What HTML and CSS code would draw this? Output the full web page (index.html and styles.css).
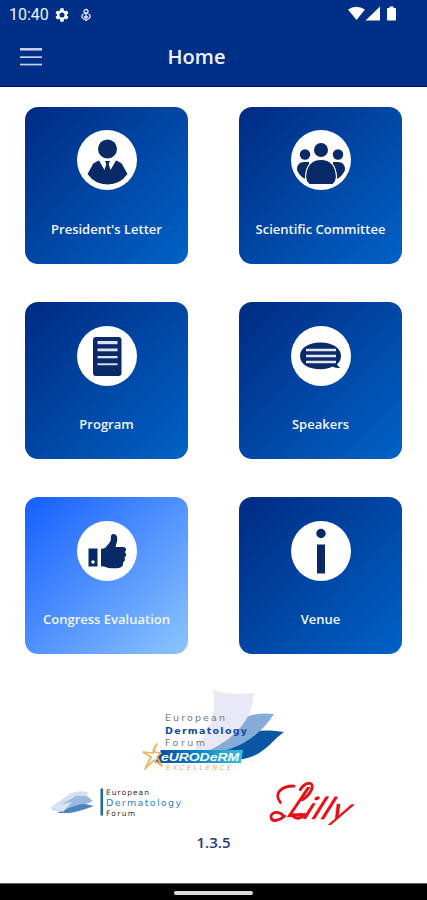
FILE: index.html
```html
<!DOCTYPE html>
<html lang="en">
<head>
<meta charset="utf-8">
<title>Home</title>
<link rel="stylesheet" href="styles.css">
</head>
<body>
<div class="app">
  <header class="top">
    <div class="status">
      <span class="clock">10:40</span>
      <svg class="gear" viewBox="0 0 24 24"><path fill="#fff" fill-rule="evenodd" d="M19.4 13a7.500 7.500 0 0 0 0-2l2.300-1.800-2.300-4-2.800 1.100a8 8 0 0 0-1.800-1L14.400 2H9.600l-.4 3.300a8 8 0 0 0-1.800 1L4.600 5.200l-2.300 4L4.600 11a7.500 7.500 0 0 0 0 2l-2.300 1.800 2.300 4 2.800-1.100a8 8 0 0 0 1.800 1l.4 3.300h4.800l.4-3.300a8 8 0 0 0 1.800-1l2.800 1.100 2.300-4zM12 15.800a3.800 3.800 0 1 1 0-7.600 3.800 3.800 0 0 1 0 7.600z"/></svg>
      <svg class="sync" viewBox="0 0 10 14"><g fill="none" stroke="#dfe6ff" stroke-width="1.300"><circle cx="5" cy="3.500" r="2"/><path d="M5 4v5M2.500 6.200C.3 7 .3 9.500 2 10.300L5 12.500l3-2.200c1.700-.8 1.700-3.300-.5-4.100M3 8.300l2 2 2-2"/></g></svg>
      <svg class="signals" viewBox="0 0 50 16"><g fill="#fff"><path d="M0 3.500Q8-2 17 3.500L8.500 14z"/><path d="M17.500 14.500 32 .5v14z"/><path d="M39 3q0-1 1-1h1.500V.5h4V2H47q1 0 1 1v10.500q0 1-1 1h-7q-1 0-1-1z"/></g></svg>
    </div>
    <div class="bar">
      <svg class="menu" viewBox="0 0 22 20"><g fill="#c9cdea"><rect y="1" width="22" height="2.600"/><rect y="9.300" width="22" height="1.700"/><rect y="16.700" width="22" height="1.700"/></g></svg>
      <h1>Home</h1>
    </div>
  </header>

  <main class="grid">
    <a class="card">
      <svg class="icon" viewBox="0 0 60 60"><circle cx="30" cy="30" r="30" fill="#fff"/><g fill="#092967"><circle cx="30.500" cy="19" r="9.500"/><path d="M10.500 44 16 34q1-1.500 6-3.500l5.500 9.500 1.800-6-1.300-3h5l-1.300 3 1.800 6L39 30.500q5 2 6 3.500l5.500 10Q43 54.500 30.500 54.500T10.500 44z"/></g></svg>
      <span>President's Letter</span>
    </a>
    <a class="card">
      <svg class="icon" viewBox="0 0 60 60"><circle cx="30" cy="30" r="30" fill="#fff"/><g fill="#092967"><circle cx="14" cy="24.500" r="5.200"/><circle cx="47" cy="24.500" r="5.200"/><circle cx="30" cy="20" r="7"/><path d="M6 40q0-8 7-8h5v17l-5-.5Q8 45 6 40zM54 40q0-8-7-8h-5v17l5-.5Q52 45 54 40z"/><path stroke="#fff" stroke-width="1.200" d="M18 54.500Q14.500 51 14.500 47q1-17.500 15.500-17.500T45.500 47q0 4-3.500 7.500z"/></g></svg>
      <span>Scientific Committee</span>
    </a>
    <a class="card">
      <svg class="icon" viewBox="0 0 60 60"><circle cx="30" cy="30" r="30" fill="#fff"/><rect x="16" y="11" width="28.500" height="39" rx="3" fill="#092967"/><g fill="#dbe1f2"><rect x="20.500" y="15" width="20" height="3.200"/><rect x="20.500" y="22.500" width="20" height="2.800"/><rect x="20.500" y="30" width="20" height="2.300"/><rect x="20.500" y="37.300" width="20" height="1.900"/></g></svg>
      <span>Program</span>
    </a>
    <a class="card">
      <svg class="icon" viewBox="0 0 60 60"><circle cx="30" cy="30" r="30" fill="#fff"/><path fill="#092967" d="M29.500 16.500c12 0 20.500 5.500 20.500 13.500 0 3.500-1.500 6-4 8.500 1 1.500 2 2.500 3.500 3.500-3.500 0-6-.5-8-1.500-3.500 1.700-7.500 2.800-12 2.800C17.500 43.300 9 38 9 30s8.500-13.500 20.500-13.500z"/><path stroke="#e4e7f6" stroke-width="2.300" d="M15 24h30M15 30h30M15 36h30"/></svg>
      <span>Speakers</span>
    </a>
    <a class="card card-active">
      <svg class="icon" viewBox="0 0 60 60"><circle cx="30" cy="30" r="30" fill="#fff"/><path fill="#092967" d="M11.500 27.500h9v18h-9zM24 28l4-1c3-3 5-5.500 5.800-8 .3-2-.5-6 2.500-6 4 0 5 4.500 3 10l-.8 3h7.500c3.500 0 4 3.500 1.700 5 2 1.500 1.700 4.500-.2 5.500 1 2 .3 4-1.500 5 .5 3-1 5-4 5.500-6 .8-11 .3-15-1.500l-3-.3z"/><circle cx="16" cy="41" r="1.700" fill="#fff"/></svg>
      <span>Congress Evaluation</span>
    </a>
    <a class="card">
      <svg class="icon" viewBox="0 0 60 60"><circle cx="30" cy="30" r="30" fill="#fff"/><g fill="#092967"><circle cx="30" cy="12.500" r="4.700"/><rect x="26" y="23.500" width="8" height="29"/></g></svg>
      <span>Venue</span>
    </a>
  </main>

  <footer class="foot">
    <svg class="edf-large" viewBox="0 0 155 90" role="img" aria-label="European Dermatology Forum, Euroderm Excellence">
      <defs><linearGradient id="band"><stop offset="0" stop-color="#08479b"/><stop offset=".45" stop-color="#087fc5"/><stop offset="1" stop-color="#36c4dd"/></linearGradient></defs>
      <path fill="#0956a5" d="M149 47C127 43 94 46 66 65L55 74h53c22-4 29-19 41-27z"/>
      <path fill="#85abd8" d="M139 29C118 26 96 34 82 54L65 70c30-3 55-12 74-41z"/>
      <path fill="#e8e8f7" d="M78 5c13 5 27 4 41 3-2 25-15 43-46 58l-24 8C68 58 84 33 78 5z"/>
      <g class="edf-words"><text x="30" y="36" textLength="60" fill="#777">European</text><text x="30" y="49" textLength="82" fill="#124c9c" class="strong">Dermatology</text><text x="30" y="61" textLength="40" fill="#777">Forum</text></g>
      <path fill="url(#band)" d="M26 65h82l-2 13H20z"/>
      <text class="euro" x="26" y="75.500" textLength="78" lengthAdjust="spacingAndGlyphs">eURODeRM</text>
      <path fill="none" stroke="#edb461" stroke-width="1.700" stroke-linejoin="round" d="M22 59q-4 4-4 9l-10-1 8 5-6 12 9-9 8 6-5-9 4-4-7-1q0-4 3-8z"/>
      <text class="excellence" x="31" y="84.500" textLength="65">EXCELLENCE</text>
    </svg>
    <div class="sponsors">
      <svg class="edf-small" viewBox="0 0 140 40" role="img" aria-label="European Dermatology Forum">
        <path fill="#d3dfef" d="M5 23 26 8q9-3 17-1l-5 15-23 5z"/><path fill="#9bbadd" d="M7 25 31 11h11l6 5-23 10z"/><path fill="#4c83bd" d="M12 28q19-9 28-9l9 2q-16 6-25 7z"/><path fill="#d8e5f4" d="M5 23q15-5 22-6l-9 10z"/>
        <path fill="#1767ae" d="M55.500 3.500H58v27h-2.500z"/>
        <g class="small-words"><text x="61" y="9.500" font-size="7.500" textLength="43" fill="#333">European</text><text x="61" y="20.500" font-size="9.500" textLength="75" fill="#347fc0">Dermatology</text><text x="61" y="30.500" font-size="7.500" textLength="29" fill="#333">Forum</text></g>
      </svg>
      <svg class="lilly" viewBox="0 0 95 55" role="img" aria-label="Lilly">
        <g transform="matrix(1.040 .03 0 1.120 -2 .5)">
          <g class="script"><text transform="matrix(1 -.08 -.6 1 16 35)" font-size="38">L</text><text transform="matrix(1.350 0 -.5 1 32 36)" font-size="28">illy</text></g>
          <path fill="none" stroke="#e60f18" stroke-width="2.600" stroke-linecap="round" d="M12 22C4 13 15 7 25 7M33 19C41 14 46 5 40 4 36 4 33 7 31 10M15 34C9 28 2 32 3 36c1 4 8 2 13-2M24 34q6 4 11-2"/>
        </g>
      </svg>
    </div>
    <div class="version">1.3.5</div>
  </footer>
  <div class="nav"><i></i></div>
</div>
</body>
</html>
```
FILE: styles.css
```css
* { box-sizing: border-box; }
body { margin: 0; background: #fff; font-family: "Open Sans", "Noto Sans", sans-serif; }
svg { display: block; flex: none; overflow: visible; }
.app { width: 427px; height: 900px; display: flex; flex-direction: column; overflow: hidden; }
.top { height: 87px; flex: none; background: #002f87; border-bottom: 1px solid #090b72; }
.status { height: 29px; display: flex; align-items: center; padding: 0 29px 0 9px; }
.clock { width: 39px; color: #eef2ff; font: 16px/29px Roboto, sans-serif; white-space: nowrap; }
.gear { width: 16px; height: 16px; margin-left: 6px; }
.sync { width: 10px; height: 14px; margin-left: 11px; }
.signals { width: 50px; height: 16px; margin-left: auto; margin-top: -2px; }
.bar { height: 56px; display: grid; grid-template-columns: 62px 1fr 96px; align-items: center; }
.menu { width: 22px; height: 20px; margin-left: 20px; }
h1 { margin: 0; color: #f1f4ff; font-size: 20px; line-height: 28px; font-weight: 600; text-align: center; }
.grid { display: grid; grid-template-columns: 163px 163px; grid-auto-rows: 157px; gap: 38.4px 51px; padding: 19.600px 25px 0; flex: none; }
.card { display: flex; flex-direction: column; align-items: center; padding-top: 23.700px; border-radius: 13px; background: linear-gradient(135deg, #002b83, #0062c6); color: #f4f7ff; font-size: 13px; font-weight: 600; line-height: 18px; white-space: nowrap; }
.card-active { background: linear-gradient(135deg, #145eff, #8cc5ff); }
.icon { width: 60px; height: 60px; margin-bottom: 29.300px; }
.foot { flex: 1; min-height: 0; padding-top: 30.600px; }
.edf-large { width: 155px; height: 90px; margin-left: 135px; }
.edf-words { font: 9.500px "DejaVu Sans", sans-serif; }
.strong { font-weight: 700; }
.euro { font: italic 700 10px "Liberation Sans", sans-serif; fill: #fff; }
.excellence { font: italic 6.500px "Liberation Sans", sans-serif; fill: #e2aa5c; }
.sponsors { display: flex; gap: 85px; padding-left: 45px; height: 55px; margin-top: 2px; }
.edf-small { width: 140px; height: 40px; margin-top: 8px; }
.small-words { font-family: "DejaVu Sans", sans-serif; }
.lilly { width: 95px; height: 55px; }
.script { font-family: Lato, sans-serif; font-style: italic; fill: #e60f18; }
.version { color: #293681; font-size: 15px; line-height: 20px; font-weight: 600; text-align: center; }
.nav { height: 17px; flex: none; background: #000; border-top: 1px solid #666; display: flex; justify-content: center; padding-top: 7px; }
.nav i { width: 79px; height: 4px; border-radius: 2px; background: #ddd; }
```
